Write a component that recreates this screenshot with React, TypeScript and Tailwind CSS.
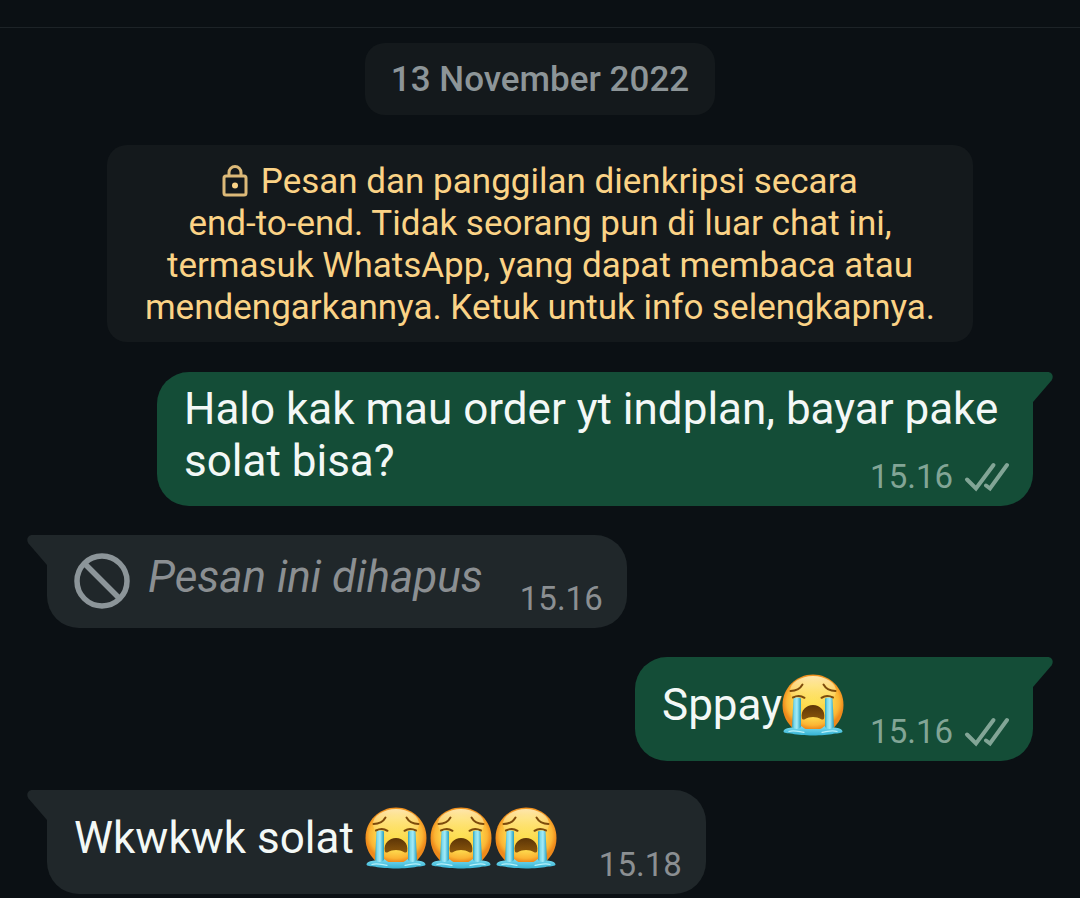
import { useId } from "react";
import type { ReactNode } from "react";
import clsx from "clsx";

type Side = "in" | "out";

function LockIcon() {
  return (
    <svg viewBox="0 0 26 34" className="inline-block h-[34px] w-[26px] mr-1 align-[-5px] text-[#dcb978]" fill="none" stroke="currentColor" strokeWidth="3" aria-hidden="true">
      <rect x="2" y="12" width="22" height="19" rx="2" />
      <path d="M7 12V8.500a6 6 0 0 1 12 0V12" />
      <circle cx="13" cy="21.500" r="3" fill="#fbd386" stroke="none" />
    </svg>
  );
}

function BlockedIcon() {
  return (
    <svg viewBox="0 0 56 56" className="h-14 w-14 shrink-0 text-[#8c9599]" fill="none" stroke="currentColor" strokeWidth="5.500" aria-hidden="true">
      <circle cx="28" cy="28" r="25" />
      <path d="M10.500 10.500l35 35" />
    </svg>
  );
}

function ReadTicks() {
  return (
    <svg viewBox="0 0 46 30" className="h-[30px] w-[46px]" fill="none" stroke="currentColor" strokeWidth="4" strokeLinecap="round" aria-label="Terkirim">
      <path d="M4 17.500l9 9L30.500 3" />
      <path d="M23 23.500l4 3L44 3" />
    </svg>
  );
}

function CryingFace() {
  const id = useId();
  const face = `${id}-face`;
  const shine = `${id}-shine`;
  const tear = `${id}-tear`;
  const mouth = `${id}-mouth`;
  const pool = `${id}-pool`;

  return (
    <svg viewBox="0 0 62 62" className="inline-block h-[62px] w-[62px] mr-[3px] align-[-16px]" role="img" aria-label="😭">
      <defs>
        <radialGradient id={face} cx="0.5" cy="0.5" r="0.5">
          <stop offset="0" stopColor="#fde04c" />
          <stop offset="0.62" stopColor="#fdd44a" />
          <stop offset="0.86" stopColor="#fbb534" />
          <stop offset="1" stopColor="#ee8a1b" />
        </radialGradient>
        <linearGradient id={shine} x1="0" y1="0" x2="0" y2="1">
          <stop offset="0" stopColor="#fff3c4" stopOpacity="0.85" />
          <stop offset="1" stopColor="#ffe67a" stopOpacity="0.1" />
        </linearGradient>
        <linearGradient id={tear} x1="0" y1="0" x2="1" y2="0">
          <stop offset="0" stopColor="#2fa3bd" />
          <stop offset="0.25" stopColor="#7bd9ec" />
          <stop offset="0.55" stopColor="#a6ebf6" />
          <stop offset="0.8" stopColor="#56c0da" />
          <stop offset="1" stopColor="#2c9fbd" />
        </linearGradient>
        <linearGradient id={mouth} x1="0" y1="0" x2="0" y2="1">
          <stop offset="0" stopColor="#5c3507" />
          <stop offset="1" stopColor="#8a560b" />
        </linearGradient>
        <linearGradient id={pool} x1="0" y1="0" x2="0" y2="1">
          <stop offset="0" stopColor="#7bdcf0" />
          <stop offset="1" stopColor="#35b2d3" />
        </linearGradient>
      </defs>
      <path d="M31 .5C14 .5 .500 14 .500 31c0 11 5 18 11 24h39c6-6 11-13 11-24C61.500 14 48 .500 31 .500z" fill={`url(#${face})`} />
      <ellipse cx="31" cy="17" rx="23" ry="15" fill={`url(#${shine})`} />
      <g fill="none" stroke="#7d4b0c" strokeWidth="2" strokeLinecap="round">
        <path d="M8.500 17c5 0 9.500-2 12-6.500" />
        <path d="M53.500 17c-5 0-9.500-2-12-6.500" />
        <path d="M11 23.500c4-2 8-2 11.500.3" />
        <path d="M51 23.500c-4-2-8-2-11.500.3" />
      </g>
      <path d="M19.800 44C18.500 36.500 24 31 31 31s12.500 5.500 11.200 13c-.4 1.800-2 1.800-3 1.200-5-3-11.400-3-16.400 0-1 .6-2.600.6-3-1.200z" fill={`url(#${mouth})`} />
      <path d="M1.500 57.500c0-2.500 4-3.500 8-4 3-.5 6-2 9-1.500 3 .5 3 3 6 3h13c3 0 3-2.500 6-3 3-.5 6 1 9 1.500 4 .5 8 1.500 8 4 0 1.500-4 1.800-9 2.300C42 62 20 62 10.500 59.800c-5-.5-9-.8-9-2.300z" fill={`url(#${pool})`} />
      <path d="M11.500 24.500c2-1.500 5.500-1.500 7.500 0L19 53c-2 2.500-7 2.500-9 0z" fill={`url(#${tear})`} />
      <path d="M50.500 24.500c-2-1.500-5.500-1.500-7.500 0L43 53c2 2.500 7 2.500 9 0z" fill={`url(#${tear})`} />
      <path d="M7 57.500c5-2 11 .5 15 .8M55 57.500c-5-2-11 .5-15 .8" fill="none" stroke="#b8f1fa" strokeWidth="1.300" strokeLinecap="round" />
    </svg>
  );
}

function BubbleTail({ side }: { side: Side }) {
  return (
    <svg
      viewBox="0 0 20 30"
      className={clsx("absolute top-0 h-[30px] w-5", side === "out" ? "left-full text-[#144d37]" : "right-full -scale-x-100 text-[#20272a]")}
      fill="currentColor"
      aria-hidden="true"
    >
      <path d="M0 0h14.500c5 0 6.500 5 4 8.500L0 30z" />
    </svg>
  );
}

interface BubbleProps {
  side: Side;
  time: string;
  leading: string;
  spacer: string;
  children: ReactNode;
}

// The text and the time share one grid cell; the spacer after the text keeps the last line clear of the time.
function Bubble({ side, time, leading, spacer, children }: BubbleProps) {
  return (
    <li
      className={clsx(
        "relative grid max-w-[876px] pt-[11px] pb-[19px] pl-[27px] pr-6",
        side === "out" ? "self-end rounded-[32px] rounded-tr-none bg-[#144d37]" : "self-start rounded-[32px] rounded-tl-none bg-[#20272a]"
      )}
    >
      <BubbleTail side={side} />
      <div className={clsx("col-start-1 row-start-1 text-[44px] text-[#f3f8f6]", leading)}>
        {children}
        <span className={clsx("inline-block", spacer)} />
      </div>
      <div className={clsx("col-start-1 row-start-1 -mb-2.5 flex items-center gap-2.5 self-end justify-self-end text-[33px] leading-10", side === "out" ? "text-[#82a596]" : "text-[#8b8f92]")}>
        <time>{time}</time>
        {side === "out" && <ReadTicks />}
      </div>
    </li>
  );
}

export default function App() {
  return (
    <main className="min-h-screen bg-[#0b1014] font-[Roboto,sans-serif]">
      <div className="h-7 border-b border-[#1d2327]" />
      <div className="flex flex-col items-center px-[47px] pt-[15px] pb-1">
        <h2 className="rounded-[20px] bg-[#14191c] px-[26px] pt-[15px] pb-[13px] text-[35px] leading-[44px] font-medium text-[#8d9598]">13 November 2022</h2>
        <button type="button" className="mt-[30px] max-w-[867px] rounded-[20px] bg-[#14191c] px-[38px] pt-4 pb-[13px] text-center text-[35px] leading-[42px] text-[#fbd386]">
          <LockIcon /> Pesan dan panggilan dienkripsi secara<br />
          end-to-end. Tidak seorang pun di luar chat ini,<br />
          termasuk WhatsApp, yang dapat membaca atau<br />
          mendengarkannya. Ketuk untuk info selengkapnya.
        </button>
        <ul className="mt-[30px] flex flex-col gap-[29px] self-stretch">
          <Bubble side="out" time="15.16" leading="leading-[52px]" spacer="w-40">
            Halo kak mau order yt indplan, bayar pake solat bisa?
          </Bubble>
          <Bubble side="in" time="15.16" leading="leading-[63px]" spacer="w-[120px]">
            <span className="inline-flex items-end gap-[18px] align-top">
              <BlockedIcon />
              <em className="text-[#8b8f92]">Pesan ini dihapus</em>
            </span>
          </Bubble>
          <Bubble side="out" time="15.16" leading="leading-[74px]" spacer="w-[162px]">
            Sppay
            <CryingFace />
          </Bubble>
          <Bubble side="in" time="15.18" leading="leading-[74px]" spacer="w-[122px]">
            Wkwkwk solat <CryingFace />
            <CryingFace />
            <CryingFace />
          </Bubble>
        </ul>
      </div>
    </main>
  );
}
